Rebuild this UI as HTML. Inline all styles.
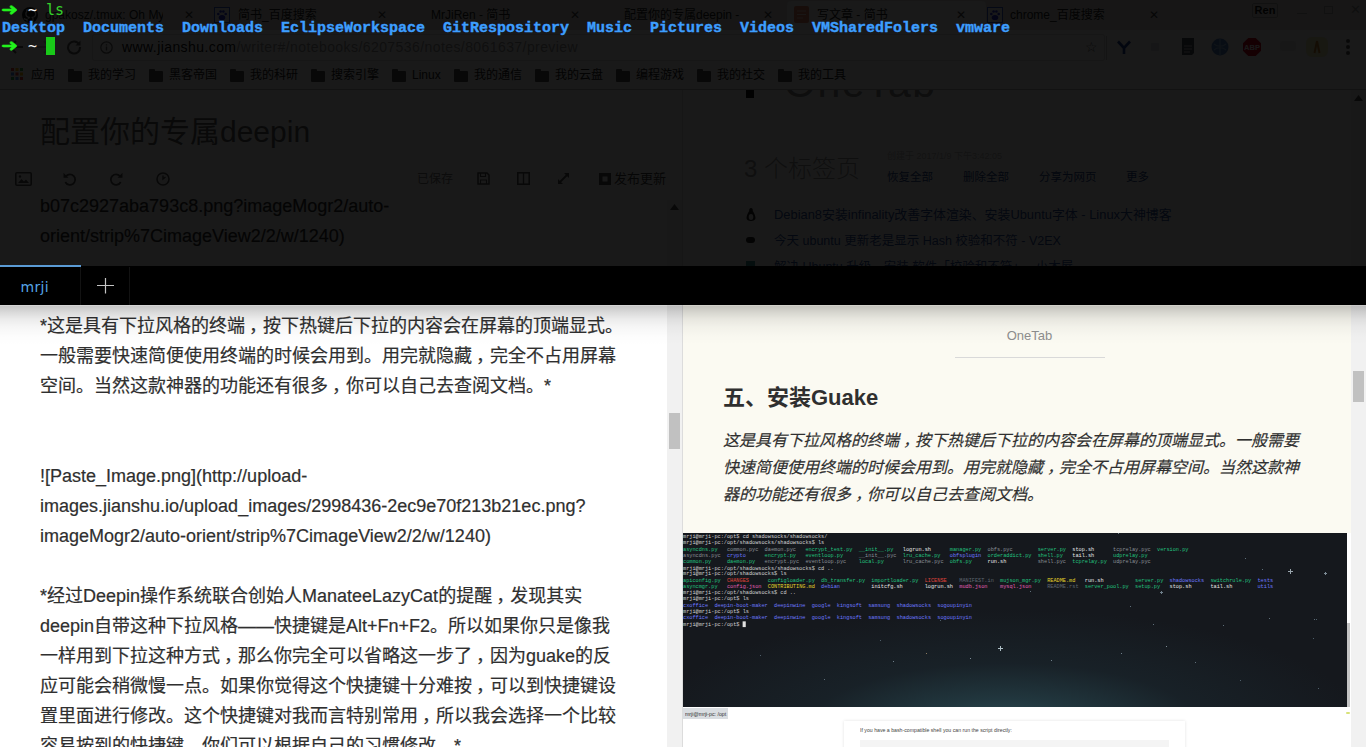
<!DOCTYPE html>
<html lang="zh-CN">
<head>
<meta charset="utf-8">
<title>写文章 - 简书</title>
<style>
*{box-sizing:border-box;margin:0;padding:0}
html,body{width:1366px;height:747px;overflow:hidden;background:#fff}
body{position:relative;font-family:"Liberation Sans","Noto Sans CJK SC",sans-serif;color:#333}
.abs{position:absolute}
/* ---------- browser chrome (under the terminal) ---------- */
#chrome{left:0;top:0;width:1366px;height:90px;background:#f2f1f0}
#tabstrip{left:0;top:0;width:1366px;height:30px;background:#e4e2e0}
.ctab{top:5px;height:20px;font-size:12px;line-height:20px;color:#222;white-space:nowrap;overflow:hidden}
.ctab .x{position:absolute;right:0;top:0;font-size:11px;color:#555}
#toolbar{left:0;top:30px;width:1366px;height:32px;background:#f7f7f7}
#omni{left:92px;top:34px;width:1013px;height:27px;background:#fff;border:1px solid #dcdcdc;border-radius:3px}
#url{left:122px;top:33px;font-size:14px;line-height:28px;letter-spacing:.42px;color:#111;white-space:nowrap}
#url span{color:#999}
#bookmarks{left:0;top:62px;width:1366px;height:28px;background:#f7f7f7;border-bottom:1px solid #b5b5b5;font-size:12px;line-height:19px;white-space:nowrap}
.bm{position:absolute;top:66px;font-size:12px;line-height:19px;color:#222;white-space:nowrap}
.fold{position:absolute;top:71px;width:14px;height:11px;background:#555;border-radius:1px}
.fold:before{content:"";position:absolute;left:0;top:-2px;width:6px;height:3px;background:#555;border-radius:1px 1px 0 0}
/* ---------- left editor pane ---------- */
#left{left:0;top:90px;width:683px;height:657px;background:#fff;overflow:hidden}
#title{left:40px;top:114px;font-size:30px;line-height:36px;color:#606060;white-space:nowrap}
#edbar{left:0;top:160px;width:667px;height:36px;background:#fff}
#editor{left:40px;top:191px;font-size:18px;line-height:30px;color:#2f2f2f;white-space:nowrap;-webkit-text-stroke:.2px #2f2f2f}
#lscroll{left:667px;top:200px;width:15px;height:547px;background:#f1f1f1}
#lthumb{left:669px;top:413px;width:11px;height:36px;background:#c1c1c1}
#divider{left:682px;top:90px;width:1px;height:657px;background:#dcdcdc}
/* ---------- right preview pane ---------- */
#right{left:683px;top:90px;width:683px;height:657px;background:#fbfaf2;overflow:hidden}
#rscroll{left:1351px;top:90px;width:15px;height:657px;background:#f1f1f1}
#rthumb{left:1353px;top:371px;width:11px;height:31px;background:#c1c1c1}
#onetab{left:954px;top:327px;width:151px;text-align:center;font-size:13px;line-height:18px;color:#8e8e8e}
#hr{left:955px;top:357px;width:150px;height:1px;background:#d9d9d9}
#h2{left:723px;top:382px;font-size:22px;line-height:32px;font-weight:bold;color:#2f2f2f;white-space:nowrap}
#para{left:723px;top:427px;font-size:16px;line-height:27.2px;font-style:italic;color:#2f2f2f;white-space:nowrap;-webkit-text-stroke:.18px #2f2f2f}
.c{position:relative;left:4px}
/* screenshot image 1 */
#shot{left:683px;top:533px;width:668px;height:174px;background:#fff;overflow:hidden}
#shotbg{left:0;top:0;width:664px;height:174px;background:
 radial-gradient(ellipse 360px 120px at 322px 196px,#2e4f57 0%,rgba(36,62,70,.8) 25%,rgba(28,44,52,.45) 55%,rgba(22,28,36,0) 100%),#15181d}
#shotsb{left:664px;top:90px;width:3px;height:84px;background:#c4c4c4}
#tt{left:0;top:.700px;transform-origin:0 0;transform:scale(.523);font-family:"Liberation Mono","DejaVu Sans Mono",monospace;font-size:10px;line-height:11.9px;color:#d0d0d0;white-space:pre}
#tt .g{color:#22c27f}#tt .y{color:#8a8f96}#tt .b{color:#6d78ff}#tt .r{color:#e0453c}#tt .o{color:#e3d32a}#tt .m{color:#e05fb4}#tt .w{color:#e8e8e8}#tt .d{color:#5f6670}#tt .c{color:#3fb5c9}
.star{position:absolute;width:1px;height:1px;background:#8a97a6}
/* screenshot image 2 */
#shot2{left:683px;top:707px;width:668px;height:40px;background:#fff;overflow:hidden}
/* ---------- terminal overlay ---------- */
#term{left:0;top:0;width:1366px;height:266px;background:rgba(0,0,0,.9)}
#termtxt{left:1px;top:1px;font-family:"DejaVu Sans Mono","Liberation Mono",monospace;font-size:15px;line-height:18px;letter-spacing:-.031px;white-space:pre;color:#e6e6e6}
#termtxt b{font-weight:normal;color:#f4f4f4}
.arr{left:1px;font:21px/24px "DejaVu Sans",sans-serif;color:#22f31c;-webkit-text-stroke:.6px #22f31c;transform-origin:0 50%;transform:translateY(.7px) scale(.97,.8)}.gl{color:#35d12b}#termls{left:2px;top:20px;font:bold 15px/18px "Liberation Mono","DejaVu Sans Mono",monospace;letter-spacing:-.0016px;white-space:pre;color:#3d9eff;-webkit-text-stroke:.4px #3d9eff}
#cursor{left:46px;top:37px;width:9px;height:18px;background:#19c919}
#tabbar{left:0;top:266px;width:1366px;height:39px;background:#000}
#tabact{left:0;top:265px;width:81px;height:2px;background:#5b9bd5}
#tabname{left:0;top:267px;width:80px;height:38px;line-height:40px;font-size:14px;letter-spacing:.35px;color:#55a4e6;padding-left:20.500px;font-family:"DejaVu Sans","Liberation Sans",sans-serif}
.tsep{top:267px;width:1px;height:38px;background:#121212}
#shadow{left:0;top:305px;width:1366px;height:40px;background:linear-gradient(to bottom,rgba(0,0,0,.17) 0,rgba(0,0,0,.17) 1px,rgba(0,0,0,.22) 1px,rgba(0,0,0,.20) 3px,rgba(0,0,0,.15) 7px,rgba(0,0,0,.08) 14px,rgba(0,0,0,.035) 22px,rgba(0,0,0,.012) 31px,rgba(0,0,0,0) 40px)}
</style>
</head>
<body>

<!-- ================= browser chrome ================= -->
<div id="chrome" class="abs"></div>
<div id="tabstrip" class="abs"></div>
<div class="abs" style="left:787px;top:1px;width:199px;height:29px;background:#f7f7f7;border-radius:4px 4px 0 0"></div>
<div class="abs ctab" style="left:45px;width:118px">gpakosz/.tmux: Oh My</div><div class="abs" style="left:184px;top:6px;font:12px/18px 'DejaVu Sans',sans-serif;color:#444">✕</div>
<div class="abs ctab" style="left:238px;width:140px">简书_百度搜索</div><div class="abs" style="left:377px;top:6px;font:12px/18px 'DejaVu Sans',sans-serif;color:#444">✕</div>
<div class="abs ctab" style="left:431px;width:140px">MrJiRen - 简书</div><div class="abs" style="left:570px;top:6px;font:12px/18px 'DejaVu Sans',sans-serif;color:#444">✕</div>
<div class="abs ctab" style="left:624px;width:140px">配置你的专属deepin -</div><div class="abs" style="left:763px;top:6px;font:12px/18px 'DejaVu Sans',sans-serif;color:#444">✕</div>
<div class="abs ctab" style="left:817px;width:140px">写文章 - 简书</div><div class="abs" style="left:956px;top:6px;font:12px/18px 'DejaVu Sans',sans-serif;color:#444">✕</div>
<div class="abs ctab" style="left:1010px;width:140px">chrome_百度搜索</div><div class="abs" style="left:1149px;top:6px;font:12px/18px 'DejaVu Sans',sans-serif;color:#444">✕</div>
<div id="toolbar" class="abs"></div>
<div id="omni" class="abs"></div>
<div id="url" class="abs">www.jianshu.com<span>/writer#/notebooks/6207536/notes/8061637/preview</span></div>
<div id="bookmarks" class="abs"></div>
<!-- favicons -->
<svg class="abs" style="left:22px;top:7px" width="16" height="16" viewBox="0 0 16 16"><circle cx="8" cy="8" r="8" fill="#181616"/><path d="M5 14.5v-2.2c-2.3.5-2.8-1.1-2.8-1.1M11 14.5v-2.6c0-.8-.3-1.2-.6-1.5 1.900-.2 3.300-1 3.300-3.600 0-.8-.3-1.500-.8-2 .1-.4.300-1.100-.1-2 0 0-.7-.2-2.100.8a7 7 0 0 0-3.800 0C5.500 2.600 4.800 2.800 4.800 2.800c-.4.900-.2 1.600-.1 2-.5.500-.8 1.200-.8 2 0 2.600 1.400 3.400 3.300 3.600-.3.300-.5.700-.5 1.300" fill="none" stroke="#f2f1f0" stroke-width="1.300"/></svg>
<svg class="abs" style="left:214px;top:7px" width="16" height="16" viewBox="0 0 16 16"><rect x=".5" y=".5" width="15" height="15" fill="#fff" stroke="#3a5fd0"/><ellipse cx="8" cy="10.500" rx="3.300" ry="2.600" fill="#2932e1"/><circle cx="4.300" cy="7" r="1.300" fill="#2932e1"/><circle cx="6.600" cy="4.500" r="1.300" fill="#2932e1"/><circle cx="9.400" cy="4.500" r="1.300" fill="#2932e1"/><circle cx="11.700" cy="7" r="1.300" fill="#2932e1"/></svg>
<svg class="abs" style="left:794px;top:6px" width="15" height="17" viewBox="0 0 15 17"><rect width="15" height="17" rx="2" fill="#e9826a"/><path d="M3 5h9M3 8.500h9M3 12h6" stroke="#f7d9cf" stroke-width="1.200"/></svg>
<svg class="abs" style="left:987px;top:7px" width="16" height="16" viewBox="0 0 16 16"><rect x=".5" y=".5" width="15" height="15" fill="#fff" stroke="#3a5fd0"/><ellipse cx="8" cy="10.500" rx="3.300" ry="2.600" fill="#2932e1"/><circle cx="4.300" cy="7" r="1.300" fill="#2932e1"/><circle cx="6.600" cy="4.500" r="1.300" fill="#2932e1"/><circle cx="9.400" cy="4.500" r="1.300" fill="#2932e1"/><circle cx="11.700" cy="7" r="1.300" fill="#2932e1"/></svg>
<!-- window controls -->
<div class="abs" style="left:1252px;top:3px;width:26px;height:15px;border:1px solid #aaa;border-radius:2px;font-size:11px;line-height:13px;text-align:center;color:#111;font-weight:bold">Ren</div>
<div class="abs" style="left:1297px;top:13px;width:10px;height:1px;background:#aaa"></div>
<div class="abs" style="left:1324px;top:6px;width:9px;height:8px;border:1px solid #aaa"></div>
<div class="abs" style="left:1350px;top:1px;font:13px/18px 'DejaVu Sans',sans-serif;color:#999">✕</div>
<!-- nav buttons -->
<svg class="abs" style="left:8px;top:39px" width="16" height="16" viewBox="0 0 16 16"><path d="M15 8H2.500M8 2 2 8l6 6" fill="none" stroke="#5a5a5a" stroke-width="2"/></svg>
<svg class="abs" style="left:36px;top:39px" width="16" height="16" viewBox="0 0 16 16"><path d="M1 8h12.500M8 2l6 6-6 6" fill="none" stroke="#c0c0c0" stroke-width="2"/></svg>
<svg class="abs" style="left:66px;top:39px" width="16" height="16" viewBox="0 0 16 16"><path d="M13.200 5.500A6 6 0 1 0 14 8" fill="none" stroke="#5a5a5a" stroke-width="2"/><path d="M14.500 1.500v5h-5z" fill="#5a5a5a"/></svg>
<svg class="abs" style="left:100px;top:41px" width="13" height="13" viewBox="0 0 13 13"><circle cx="6.500" cy="6.500" r="5.700" fill="none" stroke="#666" stroke-width="1.200"/><path d="M6.500 5.500v4M6.500 3.200v1.300" stroke="#666" stroke-width="1.400"/></svg>
<div class="abs" style="left:1085px;top:37px;font:14px/20px 'DejaVu Sans',sans-serif;color:#555">☆</div>
<!-- extensions -->
<div class="abs" style="left:1106px;top:36px;width:1px;height:24px;background:#ccc"></div>
<svg class="abs" style="left:1116px;top:39px" width="16" height="16" viewBox="0 0 16 16"><path d="M2 2.500 8 9l6-6.500M8 9v6" fill="none" stroke="#1c3f94" stroke-width="2.600"/></svg>
<div class="abs" style="left:1151px;top:43px;width:8px;height:8px;background:#d9dde6;border-radius:1px"></div>
<svg class="abs" style="left:1181px;top:38px" width="14" height="18" viewBox="0 0 14 18"><path d="M1 0h12v15l-2 2H1z" fill="#4a5260"/><path d="M3 8h8M3 11h8M3 14h6" stroke="#c9ced6" stroke-width="1.200"/></svg>
<svg class="abs" style="left:1211px;top:38px" width="18" height="18" viewBox="0 0 18 18"><circle cx="9" cy="9" r="8.500" fill="#4f86c6"/><path d="M3 6c3 3 9 3 12 0M3 12c3-3 9-3 12 0M9 .5v17" fill="none" stroke="#9cc0e6" stroke-width="1.200"/></svg>
<svg class="abs" style="left:1243px;top:38px" width="18" height="18" viewBox="0 0 18 18"><path d="M5.300 0h7.400L18 5.300v7.400L12.700 18H5.300L0 12.700V5.300z" fill="#d0021b"/><text x="9" y="12" font-family="Liberation Sans,sans-serif" font-weight="bold" font-size="7.500" text-anchor="middle" fill="#fff">ABP</text></svg>
<div class="abs" style="left:1280px;top:41px;width:16px;height:10px;background:#ececec;border-radius:2px"></div>
<svg class="abs" style="left:1306px;top:37px" width="22" height="20" viewBox="0 0 22 20"><rect width="22" height="20" rx="6" fill="#f4e58a" opacity=".55"/><path d="M11 4 8.500 16M11 4l2.500 12" stroke="#c9852d" stroke-width="2" fill="none"/></svg>
<div class="abs" style="left:1346px;top:39px;width:4px;height:4px;border-radius:2px;background:#555;box-shadow:0 6px 0 #555,0 12px 0 #555"></div>
<!-- apps grid -->
<svg class="abs" style="left:11px;top:68px" width="12" height="12" viewBox="0 0 12 12"><g><rect x="0" y="0" width="3" height="3" fill="#e94235"/><rect x="4.500" y="0" width="3" height="3" fill="#fabb05"/><rect x="9" y="0" width="3" height="3" fill="#34a853"/><rect x="0" y="4.500" width="3" height="3" fill="#4285f4"/><rect x="4.500" y="4.500" width="3" height="3" fill="#e94235"/><rect x="9" y="4.500" width="3" height="3" fill="#fabb05"/><rect x="0" y="9" width="3" height="3" fill="#34a853"/><rect x="4.500" y="9" width="3" height="3" fill="#4285f4"/><rect x="9" y="9" width="3" height="3" fill="#e94235"/></g></svg>

<div class="bm" style="left:31px">应用</div>
<div class="fold" style="left:68px"></div><div class="bm" style="left:88px">我的学习</div>
<div class="fold" style="left:149px"></div><div class="bm" style="left:169px">黑客帝国</div>
<div class="fold" style="left:230px"></div><div class="bm" style="left:250px">我的科研</div>
<div class="fold" style="left:311px"></div><div class="bm" style="left:331px">搜索引擎</div>
<div class="fold" style="left:392px"></div><div class="bm" style="left:412px">Linux</div>
<div class="fold" style="left:454px"></div><div class="bm" style="left:474px">我的通信</div>
<div class="fold" style="left:535px"></div><div class="bm" style="left:555px">我的云盘</div>
<div class="fold" style="left:616px"></div><div class="bm" style="left:636px">编程游戏</div>
<div class="fold" style="left:697px"></div><div class="bm" style="left:717px">我的社交</div>
<div class="fold" style="left:778px"></div><div class="bm" style="left:798px">我的工具</div>

<!-- ================= left : markdown editor ================= -->
<div id="left" class="abs"></div>
<div id="editor" class="abs">b07c2927aba793c8.png?imageMogr2/auto-<br>orient/strip%7CimageView2/2/w/1240)<br><br><br>*这是具有下拉风格的终端<span class="c">，</span>按下热键后下拉的内容会在屏幕的顶端显式。<br>一般需要快速简便使用终端的时候会用到。用完就隐藏<span class="c">，</span>完全不占用屏幕<br>空间。当然这款神器的功能还有很多<span class="c">，</span>你可以自己去查阅文档。*<br><br><br>![Paste_Image.png](http://upload-<br>images.jianshu.io/upload_images/2998436-2ec9e70f213b21ec.png?<br>imageMogr2/auto-orient/strip%7CimageView2/2/w/1240)<br><br>*经过Deepin操作系统联合创始人ManateeLazyCat的提醒<span class="c">，</span>发现其实<br>deepin自带这种下拉风格——快捷键是Alt+Fn+F2。所以如果你只是像我<br>一样用到下拉这种方式<span class="c">，</span>那么你完全可以省略这一步了<span class="c">，</span>因为guake的反<br>应可能会稍微慢一点。如果你觉得这个快捷键十分难按<span class="c">，</span>可以到快捷键设<br>置里面进行修改。这个快捷键对我而言特别常用<span class="c">，</span>所以我会选择一个比较<br>容易按到的快捷键<span class="c">，</span>你们可以根据自己的习惯修改。*</div>
<div id="edbar" class="abs"></div>

<svg class="abs" style="left:15px;top:172px" width="17" height="14" viewBox="0 0 17 14"><rect x=".8" y=".8" width="15.400" height="12.400" rx="1" fill="none" stroke="#555" stroke-width="1.600"/><path d="M3 11l3.500-4 2.500 2.500 2-2 3 3.500z" fill="#555"/><circle cx="5" cy="4.500" r="1.200" fill="#555"/></svg>
<svg class="abs" style="left:63px;top:172px" width="14" height="14" viewBox="0 0 14 14"><path d="M3 4.200A5.200 5.200 0 1 1 2.300 10" fill="none" stroke="#555" stroke-width="1.800"/><path d="M.5.800v5h5z" fill="#555"/></svg>
<svg class="abs" style="left:109px;top:172px" width="14" height="14" viewBox="0 0 14 14"><path d="M11 4.200A5.200 5.200 0 1 0 11.700 10" fill="none" stroke="#555" stroke-width="1.800"/><path d="M13.500.800v5h-5z" fill="#555"/></svg>
<svg class="abs" style="left:156px;top:172px" width="14" height="14" viewBox="0 0 14 14"><circle cx="7" cy="7" r="6" fill="none" stroke="#555" stroke-width="1.600"/><path d="M7 3.500V7l2.500-2" fill="none" stroke="#555" stroke-width="1.400"/></svg>
<div class="abs" style="left:417px;top:170px;font-size:12px;line-height:18px;color:#777;white-space:nowrap">已保存</div>
<svg class="abs" style="left:477px;top:172px" width="13" height="13" viewBox="0 0 13 13"><path d="M1 1h9l2 2v9H1z" fill="none" stroke="#555" stroke-width="1.500"/><path d="M3.500 1v3.500h5V1M3.500 12V8h6v4" fill="none" stroke="#555" stroke-width="1.200"/></svg>
<svg class="abs" style="left:517px;top:172px" width="13" height="13" viewBox="0 0 13 13"><rect x=".8" y=".8" width="11.400" height="11.400" fill="none" stroke="#555" stroke-width="1.600"/><path d="M6.500 1v11" stroke="#555" stroke-width="1.400"/></svg>
<svg class="abs" style="left:557px;top:172px" width="13" height="13" viewBox="0 0 13 13"><path d="M2 11 11 2" stroke="#555" stroke-width="1.800"/><path d="M7 1h5v5zM1 7v5h5z" fill="#555"/></svg>
<svg class="abs" style="left:599px;top:173px" width="12" height="12" viewBox="0 0 12 12"><path d="M0 0h12v12H0zM3.500 3.500v5h5v-5z" fill="#555" fill-rule="evenodd"/></svg>
<div class="abs" style="left:614px;top:170px;font-size:13px;line-height:18px;color:#444;white-space:nowrap">发布更新</div>
<div id="title" class="abs">配置你的专属deepin</div>
<div id="lscroll" class="abs"></div>
<div id="lthumb" class="abs"></div>
<svg class="abs" style="left:670px;top:204px" width="9" height="6" viewBox="0 0 9 6"><path d="M0 6 4.500 0 9 6z" fill="#505050"/></svg>

<div id="divider" class="abs"></div>

<!-- ================= right : preview ================= -->
<div id="right" class="abs"></div>

<div class="abs" style="left:683px;top:90px;width:668px;height:200px;background:#fff"></div>
<div class="abs" style="left:746px;top:90px;width:8px;height:8px;background:#111"></div>
<div class="abs" style="left:784px;top:55px;font-size:41px;line-height:56px;color:#8a8a8a;letter-spacing:1.500px;white-space:nowrap;clip-path:inset(35px 0 0 0)">OneTab</div>
<div class="abs" style="left:744px;top:152px;font-size:24px;line-height:34px;color:#999;font-weight:300;white-space:nowrap">3 个标签页</div>
<div class="abs" style="left:887px;top:150px;font-size:9px;line-height:12px;color:#bbb;white-space:nowrap">创建于 2017/1/9 下午3:42:05</div>
<div class="abs" style="left:887px;top:168px;font-size:11.500px;line-height:18px;color:#24478f;white-space:nowrap">恢复全部</div>
<div class="abs" style="left:963px;top:168px;font-size:11.500px;line-height:18px;color:#24478f;white-space:nowrap">删除全部</div>
<div class="abs" style="left:1039px;top:168px;font-size:11.500px;line-height:18px;color:#24478f;white-space:nowrap">分享为网页</div>
<div class="abs" style="left:1126px;top:168px;font-size:11.500px;line-height:18px;color:#24478f;white-space:nowrap">更多</div>
<svg class="abs" style="left:746px;top:208px" width="10" height="13" viewBox="0 0 10 13"><path d="M5 0C3.500 0 3 1.500 3.200 3 2 5 .5 7.500.5 10c0 2 2 3 4.500 3s4.500-1 4.500-3c0-2.500-1.500-5-2.700-7C7 1.500 6.500 0 5 0z" fill="#222"/><ellipse cx="5" cy="9" rx="2.300" ry="3" fill="#eee"/></svg>
<div class="abs" style="left:774px;top:206px;font-size:12.900px;line-height:18px;color:#2d4f9e;white-space:nowrap">Debian8安装infinality改善字体渲染、安装Ubuntu字体 - Linux大神博客</div>
<div class="abs" style="left:746px;top:237px;width:9px;height:6px;border-radius:3px;background:#222"></div>
<div class="abs" style="left:774px;top:232px;font-size:12.500px;line-height:18px;color:#2d4f9e;white-space:nowrap">今天 ubuntu 更新老是显示 Hash 校验和不符 - V2EX</div>
<div class="abs" style="left:746px;top:261px;width:9px;height:9px;background:#3b8f8a"></div>
<div class="abs" style="left:774px;top:258px;font-size:12.500px;line-height:18px;color:#2d4f9e;white-space:nowrap">解决 Ubuntu 升级、安装 软件「校验和不符」 - 小木屋</div>
<div id="onetab" class="abs">OneTab</div>
<div id="hr" class="abs"></div>
<div id="h2" class="abs">五、安装Guake</div>
<div id="para" class="abs">这是具有下拉风格的终端<span class="c">，</span>按下热键后下拉的内容会在屏幕的顶端显式。一般需要<br>快速简便使用终端的时候会用到。用完就隐藏<span class="c">，</span>完全不占用屏幕空间。当然这款神<br>器的功能还有很多<span class="c">，</span>你可以自己去查阅文档。</div>
<div id="shot" class="abs"><div id="shotbg" class="abs"></div><div id="shotsb" class="abs"></div><div class="star" style="left:315.0px;top:115.0px;width:5px;height:1px;background:#aebfc6"></div><div class="star" style="left:317.0px;top:113.0px;width:1px;height:5px;background:#aebfc6"></div><div class="star" style="left:243.0px;top:120.0px;background:#8a7a60"></div><div class="star" style="left:287.0px;top:125.0px;background:#7d8c96"></div><div class="star" style="left:368.0px;top:126.5px;background:#6f7f8a"></div><div class="star" style="left:438.0px;top:119.5px;background:#6f7f8a"></div><div class="star" style="left:483.0px;top:112.5px;background:#7d8c96"></div><div class="star" style="left:512.0px;top:128.5px;background:#5f6f7a"></div><div class="star" style="left:209.5px;top:127.5px;background:#6f7f8a"></div><div class="star" style="left:141.0px;top:145.5px;background:#5f6f7a"></div><div class="star" style="left:605.0px;top:38.0px;width:5px;height:1px;background:#9aa6ae"></div><div class="star" style="left:607.0px;top:36.0px;width:1px;height:5px;background:#9aa6ae"></div><div class="star" style="left:641.0px;top:39.5px;width:3px;height:1px;background:#7d8c96"></div><div class="star" style="left:642.0px;top:38.5px;width:1px;height:3px;background:#7d8c96"></div><div class="star" style="left:477.0px;top:59.0px;width:3px;height:1px;background:#6f7f8a"></div><div class="star" style="left:478.0px;top:58.0px;width:1px;height:3px;background:#6f7f8a"></div><div class="star" style="left:578.5px;top:35.5px;background:#5f6f7a"></div><div class="star" style="left:434.5px;top:0.0px;background:#6f7f8a"></div><div class="star" style="left:346.5px;top:57.5px;background:#5f6f7a"></div><div class="star" style="left:469.5px;top:90.5px;background:#5f6f7a"></div><div class="star" style="left:539.5px;top:91.5px;background:#5f6f7a"></div><div class="star" style="left:630.5px;top:85.5px;background:#5f6f7a"></div><div class="star" style="left:561.5px;top:24.5px;background:#5f6f7a"></div><div class="star" style="left:446.5px;top:72.5px;background:#5f6f7a"></div><div class="star" style="left:585.5px;top:84.5px;background:#5f6f7a"></div><div class="star" style="left:633.0px;top:85.5px;background:#4f5f6a"></div><div class="star" style="left:634.5px;top:154.5px;background:#4f5f6a"></div><div class="star" style="left:629.5px;top:104.5px;background:#4f5f6a"></div><div class="star" style="left:196.5px;top:106.5px;background:#4f5f6a"></div><div class="star" style="left:76.5px;top:121.5px;background:#4f5f6a"></div><div class="star" style="left:556.5px;top:146.5px;background:#4f5f6a"></div><div class="star" style="left:256.5px;top:86.5px;background:#4f5f6a"></div>
<div id="tt" class="abs">mrji@mrji-pc:/opt$ cd shadowsocks/shadowsocks/
mrji@mrji-pc:/opt/shadowsocks/shadowsocks$ ls
<span class="g">asyncdns.py</span>   <span class="y">common.pyc</span>  <span class="y">daemon.pyc</span>   <span class="g">encrypt_test.py</span>  <span class="g">__init__.py</span>   <span class="w">logrun.sh</span>      <span class="g">manager.py</span>  <span class="y">obfs.pyc</span>        <span class="g">server.py</span>  <span class="w">stop.sh</span>      <span class="y">tcprelay.pyc</span>  <span class="g">version.py</span>
<span class="y">asyncdns.pyc</span>  <span class="b">crypto</span>      <span class="g">encrypt.py</span>   <span class="g">eventloop.py</span>     <span class="y">__init__.pyc</span>  <span class="g">lru_cache.py</span>   <span class="b">obfsplugin</span>  <span class="g">orderaddict.py</span>  <span class="g">shell.py</span>   <span class="w">tail.sh</span>      <span class="g">udprelay.py</span>
<span class="g">common.py</span>     <span class="g">daemon.py</span>   <span class="y">encrypt.pyc</span>  <span class="y">eventloop.pyc</span>    <span class="g">local.py</span>      <span class="y">lru_cache.pyc</span>  <span class="g">obfs.py</span>     <span class="w">run.sh</span>          <span class="y">shell.pyc</span>  <span class="g">tcprelay.py</span>  <span class="y">udprelay.pyc</span>
mrji@mrji-pc:/opt/shadowsocks/shadowsocks$ cd ..
mrji@mrji-pc:/opt/shadowsocks$ ls
<span class="g">apiconfig.py</span>  <span class="r">CHANGES</span>      <span class="g">configloader.py</span>  <span class="g">db_transfer.py</span>  <span class="g">importloader.py</span>  <span class="r">LICENSE</span>    <span class="d">MANIFEST.in</span>  <span class="g">mujson_mgr.py</span>  <span class="o">README.md</span>   <span class="w">run.sh</span>          <span class="g">server.py</span>  <span class="b">shadowsocks</span>  <span class="g">switchrule.py</span>  <span class="b">tests</span>
<span class="g">asyncmgr.py</span>   <span class="m">config.json</span>  <span class="o">CONTRIBUTING.md</span>  <span class="b">debian</span>          <span class="w">initcfg.sh</span>       <span class="w">logrun.sh</span>  <span class="m">mudb.json</span>    <span class="m">mysql.json</span>     <span class="d">README.rst</span>  <span class="g">server_pool.py</span>  <span class="g">setup.py</span>   <span class="w">stop.sh</span>      <span class="w">tail.sh</span>        <span class="b">utils</span>
mrji@mrji-pc:/opt/shadowsocks$ cd ..
mrji@mrji-pc:/opt$ ls
<span class="b">cxoffice</span>  <span class="b">deepin-boot-maker</span>  <span class="b">deepinwine</span>  <span class="b">google</span>  <span class="b">kingsoft</span>  <span class="b">samsung</span>  <span class="b">shadowsocks</span>  <span class="b">sogoupinyin</span>
mrji@mrji-pc:/opt$ ls
<span class="b">cxoffice</span>  <span class="b">deepin-boot-maker</span>  <span class="b">deepinwine</span>  <span class="b">google</span>  <span class="b">kingsoft</span>  <span class="b">samsung</span>  <span class="b">shadowsocks</span>  <span class="b">sogoupinyin</span>
mrji@mrji-pc:/opt$ <span style="background:#e0e0e0"> </span></div>
</div>
<div id="shot2" class="abs">
<div class="abs" style="left:0;top:1px;width:45px;height:11px;background:#d9dde1"></div>
<div class="abs" style="left:2px;top:2px;transform-origin:0 0;transform:scale(.5);font-size:10.500px;line-height:18px;color:#333;white-space:nowrap">mrji@mrji-pc: /opt</div>
<div class="abs" style="left:161px;top:14px;width:341px;height:40px;background:#fff;box-shadow:0 0 3px rgba(0,0,0,.12)"></div>
<div class="abs" style="left:177px;top:18px;transform-origin:0 0;transform:scale(.5);font-size:10.400px;line-height:20px;color:#444;white-space:nowrap">If you have a bash-compatible shell you can run the script directly:</div>
<div class="abs" style="left:177px;top:33px;width:309px;height:10px;background:#f4f4f4"></div>
<div class="abs" style="left:663px;top:5px;width:4px;height:2px;border-radius:1px;background:#d8e27a"></div>
</div>
<div id="rscroll" class="abs"></div>
<div id="rthumb" class="abs"></div>
<svg class="abs" style="left:1354px;top:95px" width="9" height="6" viewBox="0 0 9 6"><path d="M0 6 4.500 0 9 6z" fill="#505050"/></svg>

<!-- ================= drop-down terminal ================= -->
<div id="term" class="abs"></div>
<div id="termtxt" class="abs">   <b>~</b> <span class="gl">ls</span>

   <b>~</b> </div>
<div id="termls" class="abs">Desktop  Documents  Downloads  EclipseWorkspace  GitRespository  Music  Pictures  Videos  VMSharedFolers  vmware</div>
<div class="abs arr" style="top:-3px">➜</div><div class="abs arr" style="top:33px">➜</div>
<div id="cursor" class="abs"></div>
<div id="tabbar" class="abs"></div>
<div id="tabact" class="abs"></div>
<div id="tabname" class="abs">mrji</div>
<div class="abs tsep" style="left:80px"></div>
<div class="abs tsep" style="left:129px"></div>
<svg class="abs" style="left:97px;top:278px" width="17" height="16" viewBox="0 0 17 16"><path d="M8.500 0v15.500M0 7.500h17" stroke="#c4c4c4" stroke-width="1.200" fill="none"/></svg>
<div id="shadow" class="abs"></div>

</body>
</html>
